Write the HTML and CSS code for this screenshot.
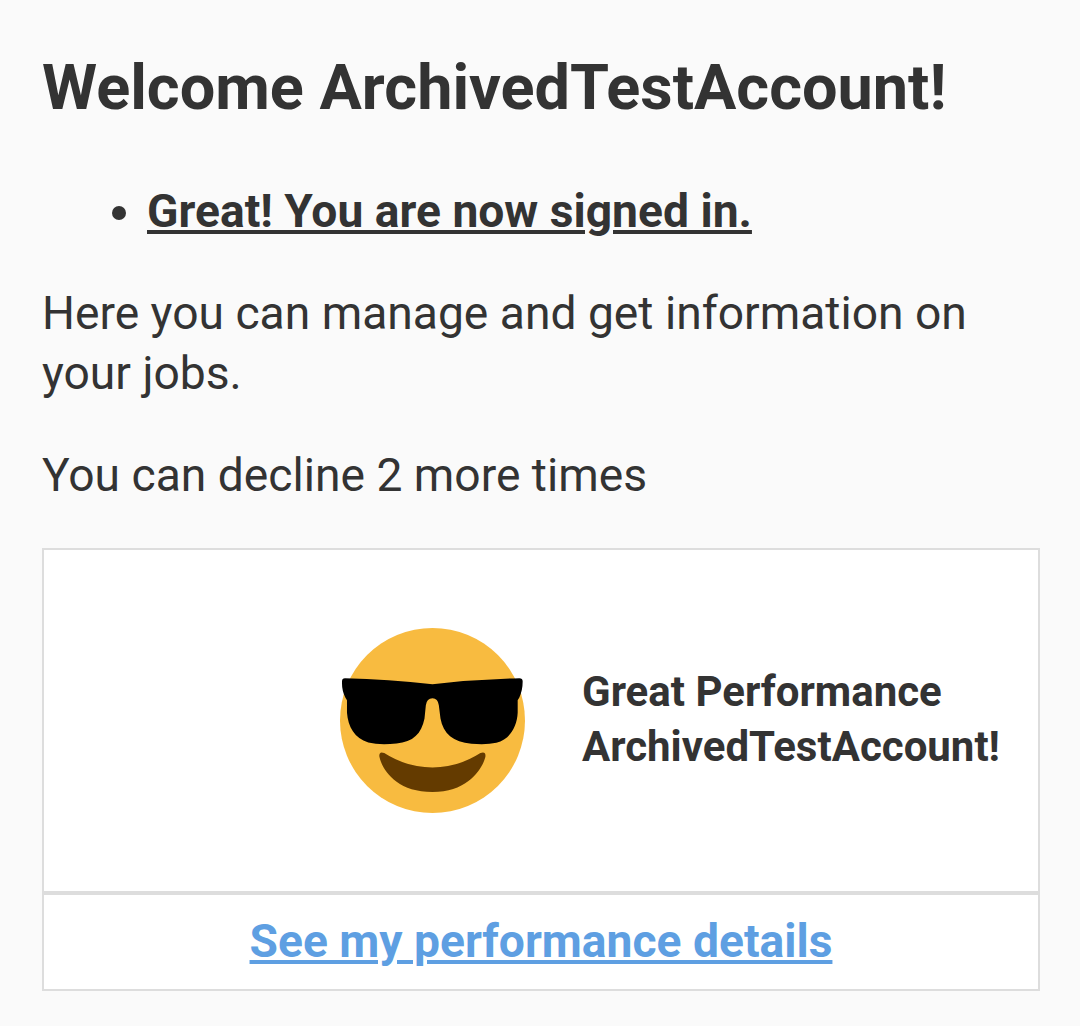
FILE: index.html
```html
<!DOCTYPE html>
<html lang="en">
<head>
  <meta charset="UTF-8">
  <meta name="viewport" content="width=device-width, initial-scale=1.0">
  <title>Dashboard</title>
  <link rel="stylesheet" href="styles.css">
</head>
<body>
  <div class="container">
    <h1>Welcome ArchivedTestAccount!</h1>
    <ul class="messages">
      <li><span>Great! You are now signed in.</span></li>
    </ul>
    <p>Here you can manage and get information on your jobs.</p>
    <p>You can decline 2 more times</p>
    <div class="performance">
      <svg class="emoji" viewBox="60 53 556 556">
        <circle cx="338" cy="331" r="278" fill="#f8bb40"/>
        <path fill="#000" d="M75 204Q205 207 338 222Q470 207 599 204Q609 204 609 214Q609 240 599 262L594 270V308C592 350 570 388 530 398Q500 405 455 401C400 396 370 370 362 325L357 285Q354 264 338 264Q321 264 318 285L314 325C305 370 280 396 230 400Q180 406 145 397C104 385 84 350 81 308V270L76 262Q65 240 66 214Q66 204 75 204Z"/>
        <path fill="#643b00" d="M178 438Q178 422 193 429Q260 472 338 472Q415 472 482 429Q499 423 497 440C490 470 450 546 338 546C226 546 185 475 178 438Z"/>
      </svg>
      <div class="performance-text">Great Performance<br>ArchivedTestAccount!</div>
    </div>
    <div class="details">
      <a href="#">See my performance details</a>
    </div>
  </div>
</body>
</html>
```

FILE: styles.css
```css
body{
  margin:0;
  background:#fafafa;
  color:#333;
  font-family:Roboto, sans-serif;
  font-size:46.2px;
  line-height:60px;
}
.container{
  padding:49px 40px 0 42px;
}
h1{
  margin:0 0 54px;
  font-size:63px;
  line-height:78px;
  font-weight:bold;
}
.messages{
  margin:0 0 42px;
  padding-left:105px;
  font-weight:bold;
}
.messages span{
  text-decoration:underline;
  text-decoration-thickness:4px;
  text-underline-offset:3px;
}
p{
  margin:0 0 42px;
}
.performance{
  display:flex;
  justify-content:flex-end;
  align-items:center;
  box-sizing:border-box;
  height:345px;
  margin-top:43px;
  padding-right:38px;
  background:#fff;
  border:2px solid #ddd;
}
.emoji{
  width:185px;
  height:185px;
  margin-right:57px;
}
.performance-text{
  padding-bottom:4px;
  font-size:42px;
  line-height:55px;
  font-weight:bold;
}
.details{
  box-sizing:border-box;
  height:98px;
  padding-top:16px;
  background:#fff;
  border:2px solid #ddd;
  text-align:center;
}
.details a{
  color:#5e9fe2;
  font-weight:bold;
  text-decoration-thickness:4px;
  text-underline-offset:3px;
}
```
